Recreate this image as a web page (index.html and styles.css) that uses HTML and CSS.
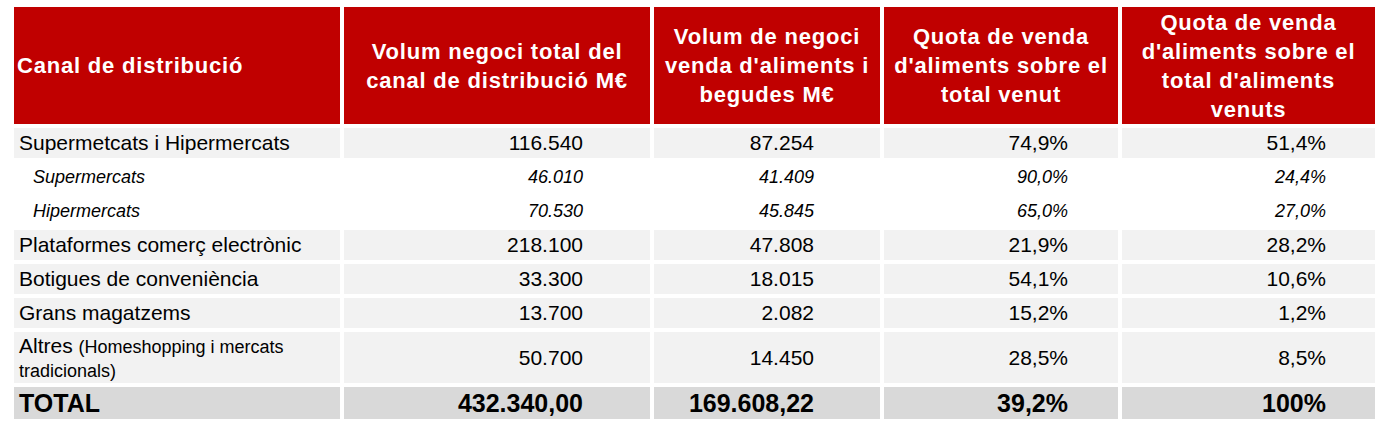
FILE: index.html
```html
<!DOCTYPE html>
<html lang="ca">
<head>
<meta charset="utf-8">
<title>Canal de distribució</title>
<link rel="stylesheet" href="styles.css">
</head>
<body>
<table class="dist">
  <colgroup>
    <col class="c1"><col class="c2"><col class="c3"><col class="c4"><col class="c5">
  </colgroup>
  <thead>
    <tr>
      <th class="first">Canal de distribució</th>
      <th>Volum negoci total del<br>canal de distribució M€</th>
      <th>Volum de negoci<br>venda d'aliments i<br>begudes M€</th>
      <th>Quota de venda<br>d'aliments sobre el<br>total venut</th>
      <th>Quota de venda<br>d'aliments sobre el<br>total d'aliments<br>venuts</th>
    </tr>
  </thead>
  <tbody>
    <tr class="main">
      <td>Supermetcats i Hipermercats</td><td>116.540</td><td>87.254</td><td>74,9%</td><td>51,4%</td>
    </tr>
    <tr class="sub">
      <td>Supermercats</td><td>46.010</td><td>41.409</td><td>90,0%</td><td>24,4%</td>
    </tr>
    <tr class="sub">
      <td>Hipermercats</td><td>70.530</td><td>45.845</td><td>65,0%</td><td>27,0%</td>
    </tr>
    <tr class="main">
      <td>Plataformes comerç electrònic</td><td>218.100</td><td>47.808</td><td>21,9%</td><td>28,2%</td>
    </tr>
    <tr class="main">
      <td>Botigues de conveniència</td><td>33.300</td><td>18.015</td><td>54,1%</td><td>10,6%</td>
    </tr>
    <tr class="main">
      <td>Grans magatzems</td><td>13.700</td><td>2.082</td><td>15,2%</td><td>1,2%</td>
    </tr>
    <tr class="main tall">
      <td class="altres">Altres <span class="note">(Homeshopping i mercats tradicionals)</span></td><td>50.700</td><td>14.450</td><td>28,5%</td><td>8,5%</td>
    </tr>
    <tr class="total">
      <td>TOTAL</td><td>432.340,00</td><td>169.608,22</td><td>39,2%</td><td>100%</td>
    </tr>
  </tbody>
</table>
</body>
</html>
```
FILE: styles.css
```css
html, body {
  margin: 0;
  padding: 0;
  background: #ffffff;
}

body {
  font-family: "Liberation Sans", Arial, sans-serif;
  color: #000000;
}

.dist {
  border-collapse: separate;
  border-spacing: 4px;
  table-layout: fixed;
  width: 1369px;
  margin: 3px 0 0 10px;
}

.c1 { width: 326px; }
.c2 { width: 306px; }
.c3 { width: 226px; }
.c4 { width: 234px; }
.c5 { width: 253px; }

.dist th {
  background: #c00000;
  color: #ffffff;
  font-weight: bold;
  font-size: 22px;
  letter-spacing: 0.8px;
  line-height: 29px;
  height: 117px;
  padding: 0;
  text-align: center;
  vertical-align: middle;
  white-space: nowrap;
}

.dist th.first {
  text-align: left;
  padding-left: 3px;
}

.dist td {
  padding: 0;
  vertical-align: middle;
  text-align: right;
  white-space: nowrap;
}

.dist td:first-child {
  text-align: left;
  padding-left: 5px;
}

.dist td:nth-child(2) { padding-right: 67px; }
.dist td:nth-child(3) { padding-right: 66px; }
.dist td:nth-child(4) { padding-right: 50px; }
.dist td:nth-child(5) { padding-right: 49px; }

.main td {
  background: #f2f2f2;
  font-size: 21px;
  line-height: 24px;
  height: 30px;
}

.sub td {
  font-size: 18px;
  font-style: italic;
  height: 30px;
}

.sub td:first-child {
  padding-left: 19px;
}

.tall td {
  height: 51px;
}

.dist td.altres {
  white-space: normal;
  line-height: 24px;
  padding-right: 30px;
}

.note {
  font-size: 18px;
  line-height: 18px;
}

.total td {
  background: #d9d9d9;
  font-weight: bold;
  font-size: 25px;
  height: 32px;
}
```
